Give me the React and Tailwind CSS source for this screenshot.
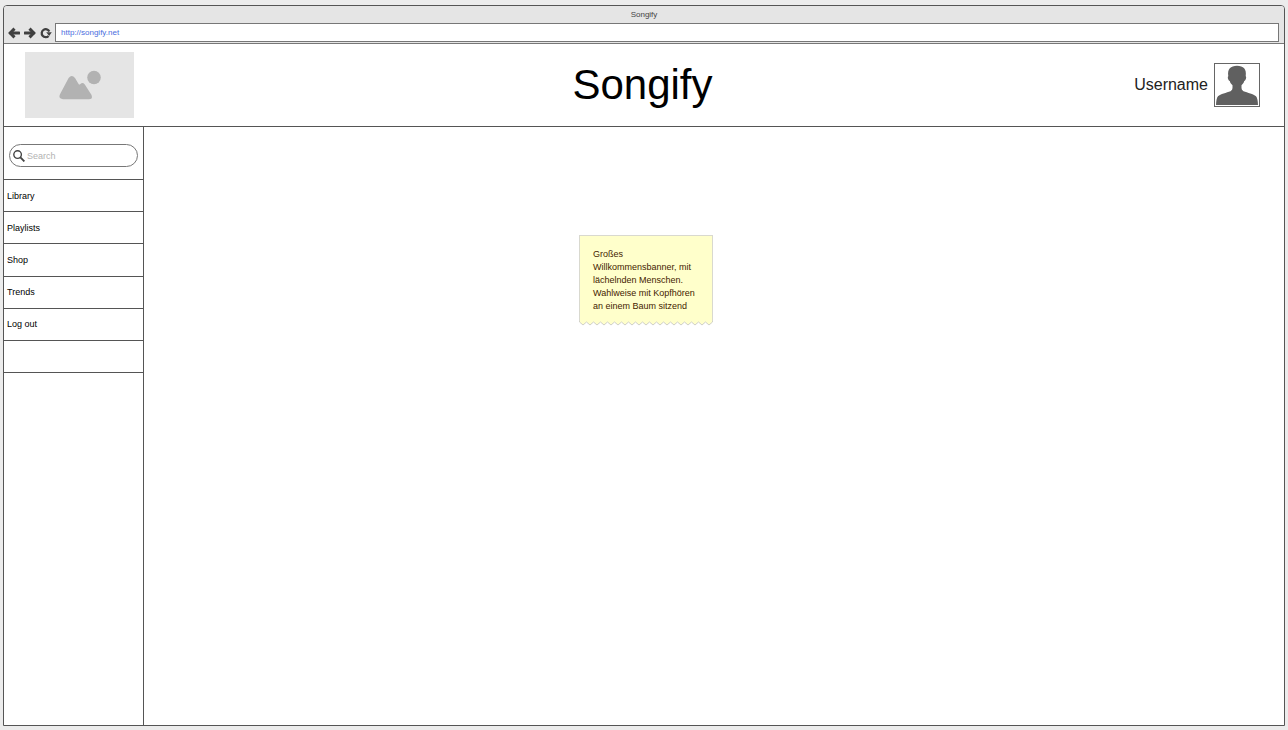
import React from "react";

const NAV_ITEMS = ["Library", "Playlists", "Shop", "Trends", "Log out"];

function ArrowLeft({ className = "" }) {
  return (
    <svg viewBox="0 0 12 12" className={`h-3 w-3 ${className}`} fill="none" stroke="#404040" strokeWidth="3" aria-hidden="true">
      <path d="M6.5 1.6 L2.2 6 L6.5 10.4" />
      <path d="M2.4 6 H11" strokeLinecap="round" />
    </svg>
  );
}

function Reload() {
  return (
    <svg viewBox="0 0 12 12" className="h-3 w-3" fill="none" aria-hidden="true">
      <path d="M8.6 9 A4 4 0 1 1 9.3 4.4" stroke="#404040" strokeWidth="2.3" />
      <path d="M6.2 5.2 H11.8 L9.2 9 Z" fill="#404040" />
    </svg>
  );
}

function BrowserBar() {
  return (
    <div className="flex h-[38px] shrink-0 flex-col border-b border-[#777] bg-[#e5e5e5]">
      <div className="flex h-[17px] items-center justify-center text-[8px] leading-[10px] text-[#444]">Songify</div>
      <div className="flex items-center pr-[5px] pl-1">
        <div className="flex w-[47px] items-center gap-1">
          <button type="button" aria-label="Back" className="flex">
            <ArrowLeft />
          </button>
          <button type="button" aria-label="Forward" className="flex">
            <ArrowLeft className="rotate-180" />
          </button>
          <button type="button" aria-label="Reload" className="flex">
            <Reload />
          </button>
        </div>
        <input
          type="text"
          aria-label="Address"
          defaultValue="http://songify.net"
          className="h-[19px] min-w-0 flex-1 border border-[#777] bg-white px-[5px] text-[8px] leading-[10px] text-[#4a6ee0] outline-none"
        />
      </div>
    </div>
  );
}

function Header() {
  return (
    <header className="grid h-[83px] shrink-0 grid-cols-[1fr_auto_1fr] items-center border-b border-[#555] pr-6 pl-[21px]">
      <div className="flex h-[66px] w-[109px] items-center justify-center bg-[#e5e5e5]">
        <svg viewBox="0 0 42 30" className="h-[30px] w-[42px]" fill="#b2b2b2" role="img" aria-label="Image placeholder">
          <circle cx="35" cy="7.5" r="6.8" />
          <path d="M9.6 8 Q12.8 4 16 8 L19.6 14 Q20.4 15 21.4 14 Q23.5 12 25.8 14.4 L32.4 24.7 Q34.2 29.2 30 29.2 H4 Q-1 29 1 24.3 Z" />
        </svg>
      </div>
      <h1 className="text-[42px] leading-[48px] text-black">Songify</h1>
      <div className="flex items-center justify-end gap-1.5">
        <span className="text-base text-[#222]">Username</span>
        <div className="h-11 w-[46px] border border-[#666] p-px">
          <svg viewBox="0 0 42 40" preserveAspectRatio="none" className="h-full w-full" fill="#606060" role="img" aria-label="User picture">
            <path d="M0 40 Q.2 33.5 2 31.3 C4.5 29 10.5 27.7 14.5 26.2 Q16.6 25 16.5 23 V20.3 C14.7 18.8 14 17.2 13.8 16.1 C11.9 15.2 11.3 11.8 12.3 11.2 C11.2 4.3 14.6 .8 21 .8 C27.4 .8 30.8 4.3 29.7 11.2 C30.7 11.8 30.1 15.2 28.2 16.1 C28 17.2 27.3 18.8 25.5 20.3 V23 Q25.4 25 27.5 26.2 C31.5 27.7 37.5 29 40 31.3 Q41.8 33.5 42 40 Z" />
          </svg>
        </div>
      </div>
    </header>
  );
}

function Sidebar() {
  return (
    <aside className="w-[140px] shrink-0 border-r border-[#555]">
      <div className="h-[52px] px-[5px] pt-[17px]">
        <label className="flex h-[23px] items-center gap-0.5 rounded-full border border-[#777] px-[3px]">
          <svg viewBox="0 0 12 12" className="h-3 w-3 shrink-0" fill="none" stroke="#444" aria-hidden="true">
            <circle cx="4.6" cy="4.6" r="3.8" strokeWidth="1.4" />
            <path d="M7.4 7.4 L11.4 11.4" strokeWidth="1.9" />
          </svg>
          <input
            type="search"
            aria-label="Search"
            placeholder="Search"
            className="min-w-0 flex-1 bg-transparent text-[9px] leading-3 outline-none placeholder:text-[#b2b2b2]"
          />
        </label>
      </div>
      <nav aria-label="Main">
        <ul className="grid h-[194px] grid-rows-6 border-t border-[#555]">
          {NAV_ITEMS.map((item) => (
            <li key={item} className="border-b border-[#555]">
              <a href="#" className="flex h-full items-center px-[3px] text-[9px] leading-3 text-black">
                {item}
              </a>
            </li>
          ))}
          <li className="border-b border-[#555]" />
        </ul>
      </nav>
    </aside>
  );
}

function Note() {
  const teeth = Array.from({ length: 19 }, () => "l3.5 3 l3.5 -3").join(" ");
  return (
    <div className="w-[134px]">
      <p className="border border-b-0 border-[#d9d9cf] bg-[#ffffcb] px-[13px] pt-3 pb-2 text-[9px] leading-[13px] text-[#442200]">
        Großes
        <br />
        Willkommensbanner, mit
        <br />
        lächelnden Menschen.
        <br />
        Wahlweise mit Kopfhören
        <br />
        an einem Baum sitzend
      </p>
      <svg viewBox="0 0 134 5" className="block h-[5px] w-full" aria-hidden="true">
        <path d={`M.5 0 V1 ${teeth} V0`} fill="#ffffcb" stroke="#d0d0c8" />
      </svg>
    </div>
  );
}

export default function App() {
  return (
    <div className="flex min-h-screen flex-col bg-[#ececec] pt-[5px] pr-[3px] pb-1 pl-[3px] font-['Liberation_Sans',Arial,sans-serif]">
      <div className="flex flex-1 flex-col overflow-hidden rounded-t border border-[#555] bg-white">
        <BrowserBar />
        <Header />
        <div className="flex flex-1">
          <Sidebar />
          <main className="flex-1 pt-[108px] pl-[435px]">
            <Note />
          </main>
        </div>
      </div>
    </div>
  );
}
